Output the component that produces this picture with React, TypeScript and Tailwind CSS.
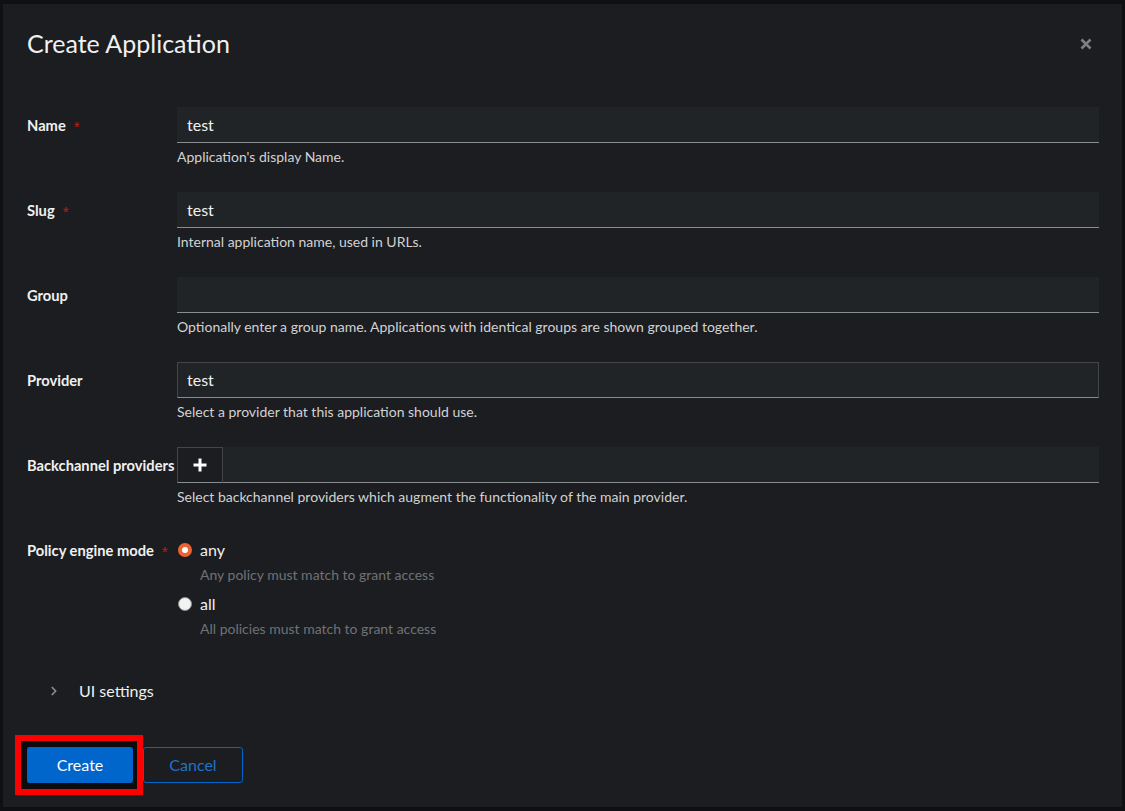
import { ChevronRight } from 'lucide-react';

const font = { fontFamily: 'Lato, "Liberation Sans", sans-serif' };

interface FieldRowProps {
  label: string;
  required?: boolean;
  value?: string;
  helper: string;
  boxed?: boolean;
  withAdd?: boolean;
}

const Required = () => (
  <span
    className="ml-[8px] text-[#c9190b] font-normal text-[15px] translate-y-[2px]"
    style={{ fontFamily: '"Liberation Sans", sans-serif' }}
  >
    *
  </span>
);

const FieldRow = ({ label, required, value, helper, boxed, withAdd }: FieldRowProps) => {
  return (
    <div className="grid grid-cols-[150px_1fr]">
      <div className="h-9 flex items-center text-[14.7px] font-bold text-[#f0f0f0] whitespace-nowrap">
        {label}
        {required && <Required />}
      </div>
      <div className="flex flex-col">
        <div className="flex h-9">
          {withAdd && (
            <button className="w-[46px] h-9 flex items-center justify-center border border-[#444548] border-b-[#8a8d90] bg-[#1b1d21] text-white">
              <svg width="16" height="16" viewBox="0 0 16 16">
                <path d="M8 1.5v13M1.5 8h13" stroke="currentColor" strokeWidth="3" />
              </svg>
            </button>
          )}
          <div
            className={
              boxed
                ? 'flex-1 flex items-center px-[9px] bg-[#212427] border border-[#444548] border-b-[#8a8d90] text-[16px] text-[#f0f0f0]'
                : 'flex-1 flex items-center px-[10px] bg-[#212427] border-b border-[#8a8d90] text-[16px] text-[#f0f0f0]'
            }
          >
            {value}
          </div>
        </div>
        <p className="mt-1 text-[14px] leading-[20px] mb-px text-[#d2d2d2]">{helper}</p>
      </div>
    </div>
  );
};

export default function App() {
  return (
    <div className="min-h-screen bg-[#0f1011] px-[3px] py-[4px]" style={font}>
      <div className="relative bg-[#1b1d21] w-[1119px] h-[803px] flex flex-col pl-6 pr-[23px] pt-6">
        <div className="flex items-center justify-between h-[31px]">
          <h1 className="text-[25px] leading-[31px] text-[#f0f0f0]">Create Application</h1>
          <button className="mr-[7px] text-[#7d7f83]" aria-label="Close">
            <svg width="12" height="12" viewBox="0 0 12 12">
              <path d="M1.5 1.5l9 9M10.5 1.5l-9 9" stroke="currentColor" strokeWidth="2.6" />
            </svg>
          </button>
        </div>

        <div className="mt-[48px] flex flex-col gap-6">
          <FieldRow label="Name" required value="test" helper="Application's display Name." />
          <FieldRow label="Slug" required value="test" helper="Internal application name, used in URLs." />
          <FieldRow
            label="Group"
            helper="Optionally enter a group name. Applications with identical groups are shown grouped together."
          />
          <FieldRow label="Provider" value="test" boxed helper="Select a provider that this application should use." />
          <FieldRow
            label="Backchannel providers"
            withAdd
            helper="Select backchannel providers which augment the functionality of the main provider."
          />
        </div>

        <div className="mt-8 grid grid-cols-[150px_1fr]">
          <div className="h-[21px] flex items-center text-[14.7px] font-bold text-[#f0f0f0] whitespace-nowrap">
            Policy engine mode
            <Required />
          </div>
          <div className="flex flex-col pl-px">
            <label className="flex items-center gap-2 h-[21px] -mt-px">
              <span className="w-[14px] h-[14px] rounded-full border-[4px] border-[#ea6330] bg-white" />
              <span className="text-[16px] text-[#f0f0f0]">any</span>
            </label>
            <p className="ml-[22px] mt-[4px] text-[14px] leading-[21px] text-[#6f7276]">Any policy must match to grant access</p>
            <label className="mt-[8px] flex items-center gap-2 h-[21px]">
              <span className="w-[14px] h-[14px] rounded-full border border-[#8a8d90] bg-[#f2f2f2]" />
              <span className="text-[16px] text-[#f0f0f0]">all</span>
            </label>
            <p className="ml-[22px] mt-1 text-[14px] leading-[21px] text-[#6f7276]">All policies must match to grant access</p>
          </div>
        </div>

        <div className="mt-[40px] flex items-center h-6 pl-[20px]">
          <ChevronRight className="w-[14px] h-[14px] text-[#8a8d90]" strokeWidth={3} />
          <span className="ml-[18px] text-[16px] text-[#f0f0f0]">UI settings</span>
        </div>

        <div className="mt-[44px] flex items-center">
          <div className="relative">
            <span className="absolute -top-3 -bottom-3 -left-3 -right-[10px] border-[6px] border-[#ff0000] pointer-events-none">
              <span className="block w-full h-full border-[6px] border-[#0c0c0c]" />
            </span>
            <button className="relative w-[106px] h-9 rounded-[3px] bg-[#0066cc] text-[16px] text-white">Create</button>
          </div>
          <button className="ml-[10px] w-[100px] h-9 rounded-[3px] border border-[#0066cc] text-[16px] text-[#1f73c9]">
            Cancel
          </button>
        </div>
      </div>
    </div>
  );
}
